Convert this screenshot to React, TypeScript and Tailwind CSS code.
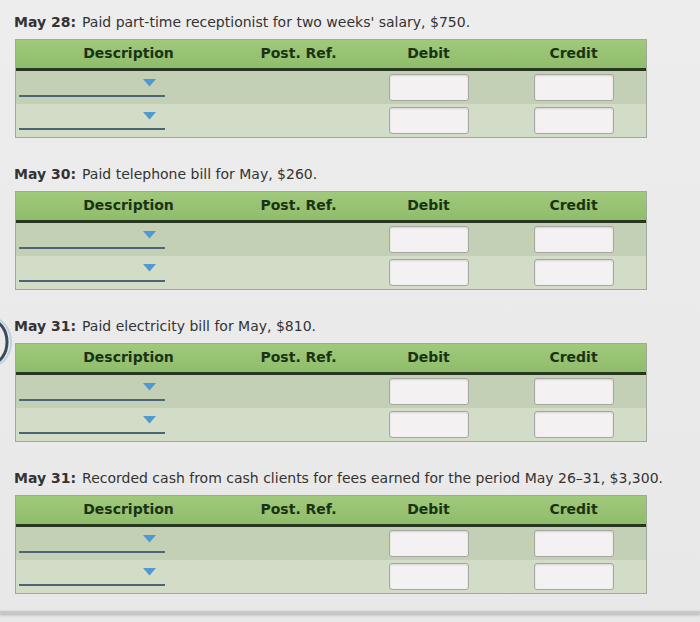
import React from "react";

type Entry = { date: string; text: string };

const entries: Entry[] = [
  { date: "May 28:", text: "Paid part-time receptionist for two weeks' salary, $750." },
  { date: "May 30:", text: "Paid telephone bill for May, $260." },
  { date: "May 31:", text: "Paid electricity bill for May, $810." },
  { date: "May 31:", text: "Recorded cash from cash clients for fees earned for the period May 26–31, $3,300." },
];

function Select() {
  return (
    <div className="ml-[3px] flex h-full w-[146px] flex-col justify-center">
      <div className="flex h-[14px] items-start justify-end pr-[9px]">
        <svg width="13" height="8" viewBox="0 0 13 8">
          <polygon points="0,0 13,0 6.5,7.5" fill="#4f9ad0" />
        </svg>
      </div>
      <div className="mt-[2px] h-[2px] w-full bg-[#4a6674]" />
    </div>
  );
}

function Input() {
  return (
    <div className="h-[27px] w-[80px] rounded-[3px] border border-[#a6a6a2] bg-[#f3f1f1] shadow-[inset_0_1px_2px_rgba(0,0,0,0.12)]" />
  );
}

function Row({ bg }: { bg: string }) {
  return (
    <div className={`grid h-[33px] grid-cols-[225px_115px_145px_1fr] items-center ${bg}`}>
      <Select />
      <div />
      <div className="flex justify-center">
        <Input />
      </div>
      <div className="flex justify-center">
        <Input />
      </div>
    </div>
  );
}

function Table() {
  return (
    <div className="w-[632px] border border-[#a3a89c] bg-[#c8d3ba]">
      <div className="grid h-[31px] grid-cols-[225px_115px_145px_1fr] items-center border-b-[3px] border-[#27361f] bg-gradient-to-b from-[#a1c97c] to-[#8fbd6a] text-[14px] font-bold text-[#1a3315]">
        <div className="pb-[2px] text-center">Description</div>
        <div className="pb-[2px] text-center">Post. Ref.</div>
        <div className="pb-[2px] text-center">Debit</div>
        <div className="pb-[2px] text-center">Credit</div>
      </div>
      <Row bg="bg-[#c4d0b5]" />
      <Row bg="bg-[#d3dcc6]" />
    </div>
  );
}

export default function App() {
  return (
    <div
      className="relative h-[622px] w-[700px] overflow-hidden bg-gradient-to-b from-[#eeeded] to-[#e9e8e8] text-[#333333]"
      style={{ fontFamily: '"DejaVu Sans", Verdana, sans-serif' }}
    >
      <svg className="absolute left-[-22px] top-[318px]" width="34" height="48" viewBox="0 0 34 48">
        <ellipse cx="14" cy="24" rx="15" ry="21" fill="none" stroke="#3d4a58" strokeWidth="3" />
        <ellipse cx="14" cy="24" rx="19" ry="24" fill="none" stroke="#9cc3dc" strokeWidth="2" opacity="0.6" />
      </svg>
      <div className="flex flex-col gap-[26px] px-[14px] pt-[12px]">
        {entries.map((e, i) => (
          <div key={i} className="flex flex-col gap-[7px]">
            <div className="h-[20px] whitespace-nowrap text-[14px] leading-[20px]">
              <span className="font-bold">{e.date}</span>
              <span className="ml-[6px]">{e.text}</span>
            </div>
            <div className="pl-[1px]">
              <Table />
            </div>
          </div>
        ))}
      </div>
      <div className="absolute bottom-[8px] left-0 h-[3px] w-full bg-[#c9c8c6] shadow-[0_1px_3px_rgba(0,0,0,0.25)]" />
    </div>
  );
}
